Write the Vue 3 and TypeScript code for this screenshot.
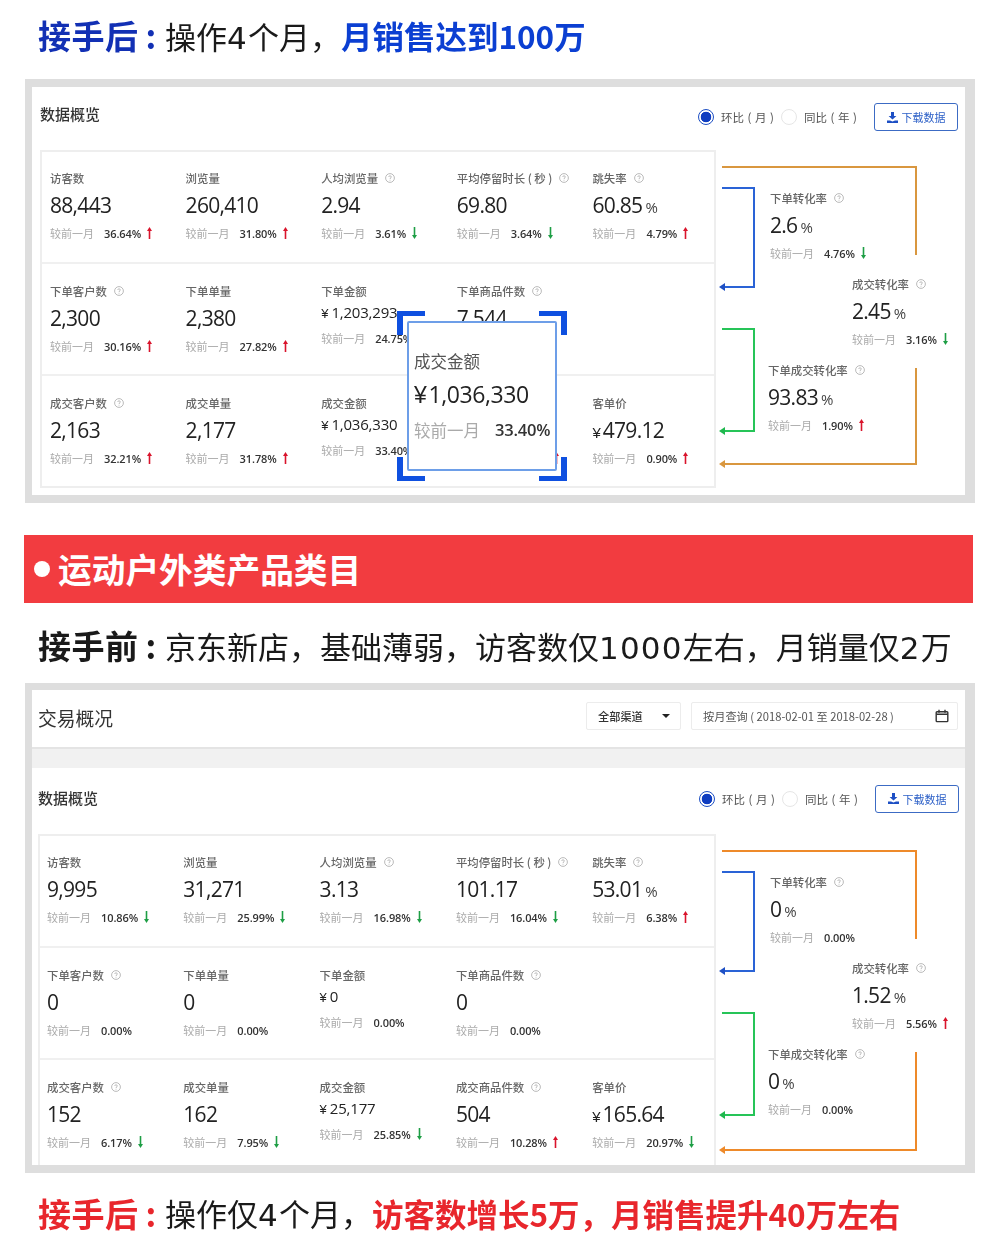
<script setup lang="ts">
interface Metric {
  label: string
  value?: string
  unit?: string
  yen?: boolean
  small?: boolean
  help?: boolean
  pct?: string
  dir?: 'up' | 'down'
  covered?: boolean
}
interface FunnelNode extends Metric {
  x: number
  y: number
}
interface Panel {
  id: string
  compact: boolean
  rows: Metric[][]
  nodes: FunnelNode[]
}

const panels: Panel[] = [
  {
    id: 'after',
    compact: false,
    rows: [
      [
        { label: '访客数', value: '88,443', pct: '36.64%', dir: 'up' },
        { label: '浏览量', value: '260,410', pct: '31.80%', dir: 'up' },
        { label: '人均浏览量', help: true, value: '2.94', pct: '3.61%', dir: 'down' },
        { label: '平均停留时长 ( 秒 )', help: true, value: '69.80', pct: '3.64%', dir: 'down' },
        { label: '跳失率', help: true, value: '60.85', unit: '%', pct: '4.79%', dir: 'up' }
      ],
      [
        { label: '下单客户数', help: true, value: '2,300', pct: '30.16%', dir: 'up' },
        { label: '下单单量', value: '2,380', pct: '27.82%', dir: 'up' },
        { label: '下单金额', value: '1,203,293', yen: true, small: true, pct: '24.75%', dir: 'up' },
        { label: '下单商品件数', help: true, value: '7,544' },
        { label: '' }
      ],
      [
        { label: '成交客户数', help: true, value: '2,163', pct: '32.21%', dir: 'up' },
        { label: '成交单量', value: '2,177', pct: '31.78%', dir: 'up' },
        { label: '成交金额', value: '1,036,330', yen: true, small: true, pct: '33.40%', dir: 'up' },
        { label: '', covered: true, dir: 'up' },
        { label: '客单价', value: '479.12', yen: true, pct: '0.90%', dir: 'up' }
      ]
    ],
    nodes: [
      { x: 54, y: 39, label: '下单转化率', help: true, value: '2.6', unit: '%', pct: '4.76%', dir: 'down' },
      { x: 136, y: 125, label: '成交转化率', help: true, value: '2.45', unit: '%', pct: '3.16%', dir: 'down' },
      { x: 52, y: 211, label: '下单成交转化率', help: true, value: '93.83', unit: '%', pct: '1.90%', dir: 'up' }
    ]
  },
  {
    id: 'before',
    compact: true,
    rows: [
      [
        { label: '访客数', value: '9,995', pct: '10.86%', dir: 'down' },
        { label: '浏览量', value: '31,271', pct: '25.99%', dir: 'down' },
        { label: '人均浏览量', help: true, value: '3.13', pct: '16.98%', dir: 'down' },
        { label: '平均停留时长 ( 秒 )', help: true, value: '101.17', pct: '16.04%', dir: 'down' },
        { label: '跳失率', help: true, value: '53.01', unit: '%', pct: '6.38%', dir: 'up' }
      ],
      [
        { label: '下单客户数', help: true, value: '0', pct: '0.00%' },
        { label: '下单单量', value: '0', pct: '0.00%' },
        { label: '下单金额', value: '0', yen: true, small: true, pct: '0.00%' },
        { label: '下单商品件数', help: true, value: '0', pct: '0.00%' },
        { label: '' }
      ],
      [
        { label: '成交客户数', help: true, value: '152', pct: '6.17%', dir: 'down' },
        { label: '成交单量', value: '162', pct: '7.95%', dir: 'down' },
        { label: '成交金额', value: '25,177', yen: true, small: true, pct: '25.85%', dir: 'down' },
        { label: '成交商品件数', help: true, value: '504', pct: '10.28%', dir: 'up' },
        { label: '客单价', value: '165.64', yen: true, pct: '20.97%', dir: 'down' }
      ]
    ],
    nodes: [
      { x: 54, y: 39, label: '下单转化率', help: true, value: '0', unit: '%', pct: '0.00%' },
      { x: 136, y: 125, label: '成交转化率', help: true, value: '1.52', unit: '%', pct: '5.56%', dir: 'up' },
      { x: 52, y: 211, label: '下单成交转化率', help: true, value: '0', unit: '%', pct: '0.00%' }
    ]
  }
]
</script>

<template>
  <div class="page">
    <div class="head head-top">
      <b class="blue-dark lead">接手后<i class="colon">:</i></b><span class="txt">操作<span class="d">4</span>个月，</span><b class="blue">月销售达到100万</b>
    </div>

    <template v-for="(panel, pi) in panels" :key="panel.id">
      <template v-if="pi === 1">
        <div class="band"><i class="dot"></i>运动户外类产品类目</div>
        <div class="head head-mid">
          <b class="lead">接手前<i class="colon">:</i></b><span class="txt">京东新店，基础薄弱，访客数仅<span class="d">1000</span>左右，月销量仅<span class="d">2</span>万</span>
        </div>
      </template>

      <section class="panel" :class="panel.id">
        <div v-if="panel.compact" class="topbar">
          <span class="top-title">交易概况</span>
          <div class="filters">
            <div class="select">
              <span>全部渠道</span><i class="caret"></i>
            </div>
            <div class="date">
              <span>按月查询 ( 2018-02-01 至 2018-02-28 )</span>
              <svg width="14" height="14" viewBox="0 0 14 14" fill="none" stroke="#333" stroke-width="1.4">
                <rect x="1.2" y="2.8" width="11.6" height="9.8" rx=".8" />
                <path d="M1.2 5.2h11.6M4 .8v3M10 .8v3" />
              </svg>
            </div>
          </div>
        </div>
        <div v-if="panel.compact" class="gap-band"></div>

        <div class="section-head">
          <span class="section-title">数据概览</span>
          <div class="tools">
            <span class="radio on"></span>
            <span class="radio-label">环比 ( 月 )</span>
            <span class="radio"></span>
            <span class="radio-label">同比 ( 年 )</span>
            <button class="dl" type="button">
              <svg width="11" height="11" viewBox="0 0 11 11" fill="#1d4fc4">
                <path d="M4 0h3v4h2.4L5.5 7.6 1.6 4H4zM0 8.6h3l2.5 1 2.5-1h3V11H0z" />
              </svg>
              下载数据
            </button>
          </div>
        </div>

        <div class="body">
          <div class="table">
            <div v-for="(row, ri) in panel.rows" :key="ri" class="row">
              <div v-for="(m, ci) in row" :key="ci" class="metric" :class="{ small: m.small }">
                <template v-if="m.label">
                  <div class="label">
                    {{ m.label }}
                    <svg v-if="m.help" class="help" width="10" height="10" viewBox="0 0 10 10" fill="none" stroke="#aaa" stroke-width=".8">
                      <circle cx="5" cy="5" r="4.4" />
                      <path d="M3.7 3.9C3.8 2.4 6.3 2.5 6.3 3.9 6.3 4.9 5 4.9 5 6M5 6.8v.8" />
                    </svg>
                  </div>
                  <div class="value">
                    <span v-if="m.yen" class="yen">¥</span>{{ m.value }}<span v-if="m.unit" class="unit">{{ m.unit }}</span>
                  </div>
                  <div v-if="m.pct" class="sub">
                    <span class="cmp">较前一月</span>
                    <span class="pct">{{ m.pct }}</span>
                    <svg v-if="m.dir" class="arrow" :class="m.dir" width="5" height="12" viewBox="0 0 5 12">
                      <path v-if="m.dir === 'up'" d="M2.5 0 5 4H3.3v8H1.7V4H0z" />
                      <path v-else d="M2.5 12 5 8H3.3V0H1.7v8H0z" />
                    </svg>
                  </div>
                </template>
                <svg v-else-if="m.covered" class="arrow up peek" width="5" height="12" viewBox="0 0 5 12">
                  <path d="M2.5 0 5 4H3.3v8H1.7V4H0z" />
                </svg>
              </div>
            </div>
          </div>

          <div class="funnel">
            <svg class="wires" width="249" height="340" viewBox="0 0 249 340" fill="none" stroke-width="2">
              <path class="w-orange" d="M6 17H200V105" />
              <path class="w-blue" d="M6 38H38V137H8" />
              <path class="a-blue" d="M3 137l6-4v8z" />
              <path class="w-green" d="M6 179H38V281H8" />
              <path class="a-green" d="M3 281l6-4v8z" />
              <path class="w-orange" :d="panel.compact ? 'M200 218V316H8' : 'M200 218V314H8'" />
              <path class="a-orange" :d="panel.compact ? 'M3 316l6-4v8z' : 'M3 314l6-4v8z'" />
            </svg>
            <div
              v-for="n in panel.nodes"
              :key="n.label"
              class="metric node"
              :style="{ left: n.x + 'px', top: n.y + 'px' }"
            >
              <div class="label">
                {{ n.label }}
                <svg class="help" width="10" height="10" viewBox="0 0 10 10" fill="none" stroke="#aaa" stroke-width=".8">
                  <circle cx="5" cy="5" r="4.4" />
                  <path d="M3.7 3.9C3.8 2.4 6.3 2.5 6.3 3.9 6.3 4.9 5 4.9 5 6M5 6.8v.8" />
                </svg>
              </div>
              <div class="value">{{ n.value }}<span class="unit">{{ n.unit }}</span></div>
              <div class="sub">
                <span class="cmp">较前一月</span>
                <span class="pct">{{ n.pct }}</span>
                <svg v-if="n.dir" class="arrow" :class="n.dir" width="5" height="12" viewBox="0 0 5 12">
                  <path v-if="n.dir === 'up'" d="M2.5 0 5 4H3.3v8H1.7V4H0z" />
                  <path v-else d="M2.5 12 5 8H3.3V0H1.7v8H0z" />
                </svg>
              </div>
            </div>
          </div>
        </div>

        <div v-if="pi === 0" class="zoom-card">
          <i class="corner tl"></i><i class="corner tr"></i><i class="corner bl"></i><i class="corner br"></i>
          <div class="zc-label">成交金额</div>
          <div class="zc-value"><span class="zc-yen">¥</span>1,036,330</div>
          <div class="zc-sub"><span>较前一月</span><b>33.40%</b></div>
        </div>
      </section>
    </template>

    <div class="head head-end">
      <b class="red lead">接手后<i class="colon">:</i></b><span class="txt">操作仅<span class="d">4</span>个月，</span><b class="red">访客数增长5万，月销售提升40万左右</b>
    </div>
  </div>
</template>

<style scoped>
.page {
  width: 1000px;
  height: 1244px;
  overflow: hidden;
  background: #fff;
  font-family: "Open Sans", "Noto Sans CJK SC", sans-serif;
  color: #222;
}
.head {
  display: flex;
  align-items: center;
  box-sizing: border-box;
  padding-left: 38px;
  font-family: "Noto Sans CJK SC", sans-serif;
  font-size: 31px;
  white-space: nowrap;
  color: #1a1a1a;
  filter: blur(0.3px);
}
.head b {
  font-weight: 700;
  font-size: 31.5px;
}
.head b.lead {
  flex: none;
  width: 127px;
  font-size: 33px;
  letter-spacing: 0.5px;
}
.colon {
  margin-left: 7px;
  font-style: normal;
}
.txt { font-weight: 400; }
.d {
  font-family: "DejaVu Sans", sans-serif;
  font-weight: 400;
  font-size: 31px;
  letter-spacing: 1.2px;
}
.head-top { height: 79px; padding-bottom: 9px; }
.head-mid { height: 80px; padding-top: 4px; }
.head-end { height: 71px; padding-top: 8px; }
.blue-dark { color: #1230b4; }
.blue { color: #0b3fd2; }
.red { color: #e8262c; }

.band {
  display: flex;
  align-items: center;
  width: 949px;
  height: 68px;
  margin: 32px 0 0 24px;
  padding-bottom: 2px;
  box-sizing: border-box;
  background: #f23c40;
  color: #fff;
  font-family: "Noto Sans CJK SC", sans-serif;
  font-size: 33.7px;
  font-weight: 700;
  white-space: nowrap;
}
.dot {
  width: 16px;
  height: 16px;
  margin: 2px 8px 0 10px;
  border-radius: 50%;
  background: #fff;
}

.panel {
  position: relative;
  box-sizing: border-box;
  width: 950px;
  margin-left: 25px;
  border: solid #dedede;
  border-width: 8px 10px 8px 7px;
  background: #fff;
  overflow: hidden;
  filter: blur(0.35px);
}
.panel.after { height: 424px; padding-left: 8px; }
.panel.before { height: 490px; padding-left: 0; border-top-width: 7px; }

.topbar {
  display: flex;
  align-items: center;
  justify-content: space-between;
  box-sizing: border-box;
  height: 59px;
  padding: 0 7px 5px 6px;
  border-bottom: 2px solid #e4e4e4;
}
.top-title {
  font-family: "Noto Sans CJK SC", sans-serif;
  font-size: 18.8px;
  color: #333;
  margin-top: 2px;
}
.filters { display: flex; gap: 10px; }
.select, .date {
  display: flex;
  align-items: center;
  justify-content: space-between;
  box-sizing: border-box;
  height: 28px;
  border: 1px solid #ececec;
  border-radius: 2px;
  font-family: "Noto Sans CJK SC", sans-serif;
  font-size: 11.2px;
  color: #333;
}
.select { width: 95px; padding: 0 10px 0 11px; font-weight: 500; }
.date { width: 267px; padding: 0 8px 0 11px; color: #555; }
.caret {
  width: 0;
  height: 0;
  border: 4px solid transparent;
  border-top: 4px solid #222;
  border-bottom: 0;
}
.gap-band { height: 19px; background: #f1f1f1; }

.section-head {
  display: flex;
  align-items: center;
  justify-content: space-between;
  box-sizing: border-box;
  height: 63px;
  padding: 0 7px 3px 0;
}
.before .section-head { height: 66px; padding: 0 6px 5px 6px; }
.section-title {
  font-family: "Noto Sans CJK SC", sans-serif;
  font-size: 15px;
  font-weight: 500;
  color: #333;
  margin-top: -3px;
}
.after .section-title { margin-top: -7px; }
.tools { display: flex; align-items: center; }
.radio {
  box-sizing: border-box;
  width: 16px;
  height: 16px;
  border-radius: 50%;
  border: 1px solid #e6e6e6;
  margin-right: 7px;
}
.radio.on {
  border: 1.5px solid #1d4fc4;
  background: radial-gradient(circle, #0f3dc0 0 5px, #fff 5.6px);
}
.radio-label {
  width: 60px;
  font-family: "Noto Sans CJK SC", sans-serif;
  font-size: 11.5px;
  word-spacing: 1px;
  color: #555;
  white-space: pre;
}
.dl {
  display: flex;
  align-items: center;
  justify-content: center;
  gap: 4px;
  box-sizing: border-box;
  width: 84px;
  height: 28px;
  margin-left: 10px;
  padding: 0;
  background: #fff;
  border: 1.5px solid #3c6bc4;
  border-radius: 3px;
  color: #2f62c8;
  font-family: "Noto Sans CJK SC", sans-serif;
  font-size: 11px;
}

.body { display: flex; align-items: flex-start; }
.table {
  box-sizing: border-box;
  width: 676px;
  height: 338px;
  border: 2px solid #eeeeee;
  flex: none;
}
.before .table { width: 678px; margin-left: 6px; height: 345px; }
.row {
  display: grid;
  grid-template-columns: repeat(4, 135.6px) 1fr;
  box-sizing: border-box;
  height: 112px;
  padding-left: 8px;
  border-bottom: 2px solid #f0f0f0;
}
.row:last-child { border-bottom: 0; }
.row + .row .metric { padding-top: 18px; }
.before .row { grid-template-columns: repeat(4, 136.3px) 1fr; padding-left: 7px; }
.metric { padding-top: 17px; min-width: 0; }
.label {
  display: flex;
  align-items: center;
  height: 18px;
  font-family: "Noto Sans CJK SC", sans-serif;
  font-size: 11.4px;
  font-weight: 500;
  color: #666;
  white-space: nowrap;
}
.help { margin-left: 7px; flex: none; }
.value {
  display: flex;
  align-items: baseline;
  height: 30px;
  margin-top: 3px;
  font-size: 21px;
  line-height: 30px;
  letter-spacing: -0.7px;
  color: #222;
  white-space: nowrap;
}
.unit { margin-left: 3px; font-size: 15px; letter-spacing: 0; color: #444; }
.yen { font-size: 15px; margin-right: 2px; font-family: "Liberation Sans", sans-serif; letter-spacing: 0; }
.small .value {
  height: 22px;
  margin-top: 1px;
  font-size: 15px;
  line-height: 22px;
  letter-spacing: -0.2px;
}
.small .yen { font-size: 13px; margin-right: 3px; }
.sub {
  display: flex;
  align-items: center;
  height: 18px;
  margin-top: 4px;
  white-space: nowrap;
}
.small .sub { margin-top: 6px; }
.cmp {
  font-family: "Noto Sans CJK SC", sans-serif;
  font-size: 11px;
  color: #aaa;
  margin-right: 10px;
}
.pct { font-size: 11px; font-weight: 600; color: #333; letter-spacing: -0.1px; }
.arrow { margin-left: 6px; flex: none; }
.arrow.up { fill: #d9142c; }
.arrow.down { fill: #1e9e45; }
.peek { display: block; margin: 60px 0 0 97px; }
.row + .row .metric .peek { margin-top: 58px; }

.funnel { position: relative; flex: 1; height: 340px; }
.wires { position: absolute; left: 0; top: 0; }
.w-orange { stroke: #d9973f; }
.a-orange { fill: #d9973f; }
.w-blue { stroke: #2a63d6; }
.a-blue { fill: #1f50c4; }
.w-green { stroke: #26c458; }
.a-green { fill: #1fb84e; }
.before .w-orange { stroke: #ee8a2a; }
.before .a-orange { fill: #ee8a2a; }
.node { position: absolute; padding-top: 0; }

.zoom-card {
  position: absolute;
  left: 375px;
  top: 234px;
  box-sizing: border-box;
  width: 150px;
  height: 150px;
  padding: 26px 0 0 5px;
  background: #fff;
  border: 2px solid #6d9ee8;
  border-radius: 2px;
}
.corner {
  position: absolute;
  box-sizing: border-box;
  width: 28px;
  height: 24px;
  border: 0 solid #0f50e0;
}
.tl { left: -12px; top: -12px; border-width: 5px 0 0 6px; }
.tr { right: -12px; top: -12px; border-width: 5px 6px 0 0; }
.bl { left: -12px; bottom: -12px; border-width: 0 0 5px 6px; }
.br { right: -12px; bottom: -12px; border-width: 0 6px 5px 0; }
.zc-label {
  font-family: "Noto Sans CJK SC", sans-serif;
  font-size: 16.5px;
  line-height: 24px;
  color: #555;
}
.zc-value {
  margin-top: 5px;
  font-size: 23px;
  line-height: 32px;
  letter-spacing: -0.4px;
  color: #222;
}
.zc-yen { font-family: "Liberation Sans", sans-serif; margin-right: 2px; }
.zc-sub {
  display: flex;
  gap: 15px;
  margin-top: 7px;
  font-size: 16.5px;
  line-height: 24px;
  white-space: nowrap;
}
.zc-sub span {
  font-family: "Noto Sans CJK SC", sans-serif;
  color: #aaa;
}
.zc-sub b { font-weight: 600; font-size: 16.5px; color: #333; letter-spacing: -0.2px; }
</style>
